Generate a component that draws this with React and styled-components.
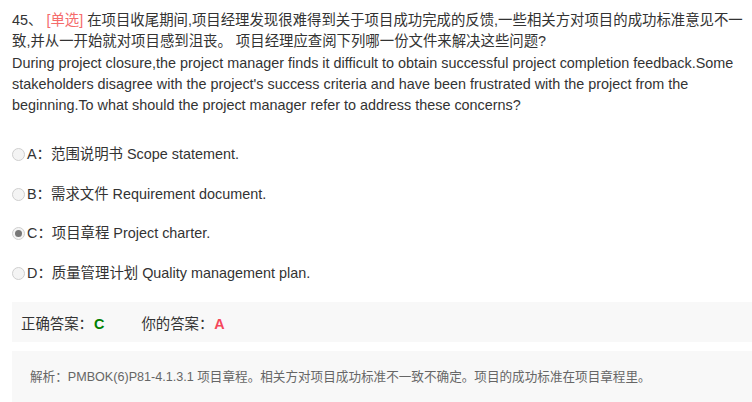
import React from "react";
import styled, { createGlobalStyle } from "styled-components";

const Global = createGlobalStyle`
  html, body { margin: 0; padding: 0; background: #fff; }
  body { font-family: "Liberation Sans", Arial, "Noto Sans CJK SC", sans-serif; color: #333; }
`;

const Page = styled.div`
  padding: 10px 0 0 12px;
  width: 752px;
  box-sizing: border-box;
`;

const Question = styled.div`
  font-size: 14.4px;
  line-height: 21.25px;
  width: 738px;
  margin-bottom: 18px;
`;

const Tag = styled.span`
  color: #f56c6c;
`;

const Options = styled.div`
  margin-bottom: 10px;
`;

const Option = styled.label`
  display: flex;
  align-items: center;
  height: 39.5px;
  font-size: 14.4px;
  line-height: 21px;
  padding-top: 1px;
  box-sizing: border-box;
`;

const Radio = styled.span`
  width: 11px;
  height: 11px;
  border-radius: 50%;
  border: 1px solid #cfcfcf;
  background: #f4f4f4;
  box-sizing: content-box;
  margin-right: 2px;
  display: flex;
  align-items: center;
  justify-content: center;
  &::after {
    content: "";
    width: 7px;
    height: 7px;
    border-radius: 50%;
    background: ${(p) => (p.checked ? "#777" : "transparent")};
  }
`;

const AnswerBar = styled.div`
  background: #f8f8f8;
  height: 40px;
  display: flex;
  align-items: center;
  padding-left: 9px;
  font-size: 14.4px;
  margin-bottom: 9px;
`;

const AnswerItem = styled.span`
  margin-right: ${(p) => p.gap || 0}px;
`;

const Letter = styled.b`
  color: ${(p) => p.color};
  font-weight: bold;
  margin-left: 1px;
`;

const Explain = styled.div`
  background: #f8f8f8;
  padding: 16px 18px 20px;
  font-size: 12.6px;
  line-height: 20px;
  color: #666;
`;

const options = [
  { key: "A", text: "范围说明书 Scope statement." },
  { key: "B", text: "需求文件 Requirement document." },
  { key: "C", text: "项目章程 Project charter.", checked: true },
  { key: "D", text: "质量管理计划 Quality management plan." },
];

export default function App() {
  return (
    <Page>
      <Global />
      <Question>
        <span>45、</span> <Tag>[单选]</Tag> 在项目收尾期间,项目经理发现很难得到关于项目成功完成的反馈,一些相关方对项目的成功标准意见不一致,并从一开始就对项目感到沮丧。 项目经理应查阅下列哪一份文件来解决这些问题?
        <br />
        During project closure,the project manager finds it difficult to obtain successful project completion feedback.Some stakeholders disagree with the project's success criteria and have been frustrated with the project from the beginning.To what should the project manager refer to address these concerns?
      </Question>
      <Options>
        {options.map((o) => (
          <Option key={o.key}>
            <Radio checked={o.checked} />
            {o.key}：{o.text}
          </Option>
        ))}
      </Options>
      <AnswerBar>
        <AnswerItem gap={37}>
          正确答案：<Letter color="#008000">C</Letter>
        </AnswerItem>
        <AnswerItem>
          你的答案：<Letter color="#f5475b">A</Letter>
        </AnswerItem>
      </AnswerBar>
      <Explain>
        解析：PMBOK(6)P81-4.1.3.1 项目章程。相关方对项目成功标准不一致不确定。项目的成功标准在项目章程里。
      </Explain>
    </Page>
  );
}
